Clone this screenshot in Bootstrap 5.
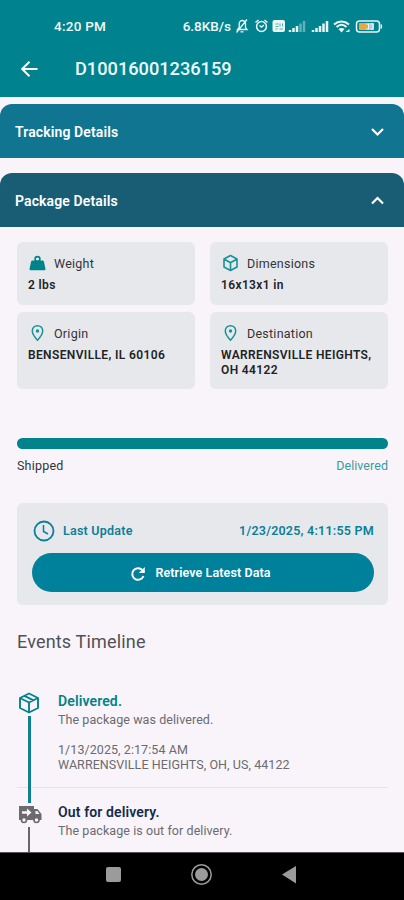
<!DOCTYPE html>
<html lang="en">
<head>
<meta charset="utf-8">
<meta name="viewport" content="width=device-width, initial-scale=1">
<title>Package tracking</title>
<link href="https://cdn.jsdelivr.net/npm/bootstrap@5.3.0/dist/css/bootstrap.min.css" rel="stylesheet">
<style>
  body { font-family: Roboto, "Liberation Sans", sans-serif; background: #f8f4fa; color: #333438; height: 900px; overflow: hidden; font-size: 13px; line-height: 15px; }
  svg { display: block; flex: none; }
  .app-head { height: 97px; background: #00838f; color: #f0fafa; }
  .status { height: 52px; padding: 0 20px 0 54px; font-size: 13.5px; font-weight: 500; }
  .clock-text { letter-spacing: .25px; }
  .title-bar { height: 34px; padding-left: 20px; }
  .title-bar h1 { font-size: 18.2px; font-weight: 500; margin-left: 36px; line-height: 22px; }
  .panel-head { height: 54px; margin-top: 7px; border-radius: 12px 12px 0 0; color: #fff; padding: 2px 20px 0 15px; font-size: 14px; font-weight: 600; letter-spacing: .12px; background: #0f7591; }
  .panel-head.open { background: #195d75; margin-top: 15px; }
  .facts { margin: 15px 16px 0 17px; display: grid; grid-template-columns: 178px 178px; column-gap: 15px; row-gap: 7px; grid-template-rows: 63px 77px; }
  .fact, .update { background: #e7e8eb; border-radius: 6px; }
  .fact { padding: 12px 0 0 11px; }
  .fact-label { height: 18px; gap: 7px; font-size: 12.5px; letter-spacing: .25px; }
  .fact-value { margin-top: 6px; font-size: 12px; font-weight: 600; letter-spacing: .37px; color: #222327; }
  .content { margin: 0 16px 0 17px; }
  .progress { height: 11px; margin-top: 49px; border-radius: 6px; }
  .progress-bar { background: #00838a; width: 100%; }
  .stage { margin-top: 9px; font-size: 12.5px; letter-spacing: .2px; }
  .teal { color: #00838a; }
  .stage .teal { color: #3a9c98; letter-spacing: .05px; }
  .update { margin-top: 30px; height: 102px; padding: 16px 14px 0 15px; }
  .update-row { height: 23px; color: #0b7f9a; font-size: 12.5px; font-weight: 600; padding-left: 1px; letter-spacing: .23px; }
  .refresh { height: 39px; width: 342px; margin-top: 11px; background: #00819b; color: #fff; font-size: 12.5px; font-weight: 600; letter-spacing: .1px; gap: 9px; padding: 2px 5px 0 0; }
  h2 { font-size: 18px; font-weight: 400; line-height: 22px; margin: 26px 0 0; color: #505056; letter-spacing: .17px; }
  .event-row { display: grid; grid-template-columns: 24px 1fr; column-gap: 17px; }
  .event-first { margin-top: 39px; height: 96px; border-bottom: 1px solid #e6e2e8; }
  .event-row strong { display: block; font-size: 14px; font-weight: 600; line-height: 18px; letter-spacing: .13px; }
  .event-text { color: #6b6b70; font-size: 12.5px; line-height: 15px; padding-top: 2px; letter-spacing: .07px; }
  .stamp { margin-top: 13px; }
  .rail { display: flex; flex-direction: column; align-items: center; }
  .rail i { display: block; width: 3px; background: #0f7f92; flex: 1; margin-top: 2px; }
  .event-first .rail { height: 111px; z-index: 1; }
  .event-last { height: 50px; margin-top: 15px; }
  .event-last .rail i { background: #68666b; width: 2px; margin-top: 3px; }
  .event-last .rail { padding-top: 2px; }
  .event-last .rail svg { margin-left: 1px; }
  .navy { color: #142c4c; }
  .sys-nav { height: 48px; background: #000; border-top: 1px solid #555; padding: 0 3px 3px 0; }
</style>
</head>
<body>
<header class="app-head">
  <div class="status d-flex align-items-center justify-content-between">
    <span class="clock-text">4:20 PM</span>
    <div class="d-flex align-items-center">
      <span>6.8KB/s</span>
      <svg class="ms-1" width="149" height="18" viewBox="0 0 149 18" fill="none" stroke="#e9f6f6" stroke-width="1.5">
        <path d="M2.5 12.5h9.5l-1.5-2V7c0-2-1-3.300-3-3.500-2-.1-3.300 1.300-3.300 3.500v3.500zM5.500 14.800h3M12 2.500 1.500 15.500" stroke-width="1.300"/>
        <circle cx="26.500" cy="9.500" r="4.900"/><path d="M24.500 8.500 26.500 10l2.500-2M20.500 5.500l3-2.500M32.500 5.500l-3-2.500"/>
        <rect x="37.500" y="3" width="12.500" height="12" rx="2" fill="#e9f6f6" stroke="none"/>
        <path d="M40.500 7h3M45 6.500v3M40.500 9.500h3M40.500 12h2M44.500 12h3.500M47.500 6.500v3" stroke="#5aabb1" stroke-width="1"/>
        <path d="M55 15v-2M58.500 15v-4M62 15V9" stroke-width="2.500"/><path d="M65.500 15V6.500M69 15V4" stroke="#62b0b6" stroke-width="2.500"/>
        <path d="M78 15v-2M81.500 15v-4M85 15V9M88.500 15V6.500M92 15V4" stroke-width="2.500"/>
        <path d="M99 7.500c4.500-4 10.500-4 15 0M101.500 10c3.300-2.800 7-2.800 10 0" stroke-width="2"/><path d="M103.500 12c2-1.500 4-1.500 6 0l-3 3.500z" fill="#e9f6f6" stroke="none"/><path d="M110.500 15h4v-3z" fill="#e9f6f6" stroke="none"/>
        <rect x="121.500" y="4" width="23" height="11" rx="3"/><rect x="124" y="6" width="9" height="7" rx="1" fill="#f0a53c" stroke="none"/><rect x="133" y="6" width="6" height="7" fill="#b8cfcc" stroke="none"/><path d="M131 7h2.500v5H131M136 7h2v5h-2" stroke="#e9f6f6" stroke-width="1"/><path d="M146.300 7.500v4"/>
      </svg>
    </div>
  </div>
  <div class="title-bar d-flex align-items-center">
    <svg width="19" height="18" viewBox="0 0 19 18" fill="none" stroke="#fff" stroke-width="2"><path d="M17.500 9H2.500M9.500 1.700 2.200 9l7.300 7.300"/></svg>
    <h1 class="mb-0">D10016001236159</h1>
  </div>
</header>
<main>
  <section class="panel-head d-flex align-items-center justify-content-between">
    <span>Tracking Details</span>
    <svg width="13" height="10" viewBox="0 0 13 10" fill="none" stroke="#fff" stroke-width="2.200"><path d="m1 2 5.500 5.500L12 2"/></svg>
  </section>
  <section class="panel-head open d-flex align-items-center justify-content-between">
    <span>Package Details</span>
    <svg width="13" height="10" viewBox="0 0 13 10" fill="none" stroke="#fff" stroke-width="2.200"><path d="m1 7.500 5.500-5.500L12 7.500"/></svg>
  </section>
  <div class="facts">
    <div class="fact">
      <div class="fact-label d-flex align-items-center">
        <svg width="19" height="18" viewBox="0 0 19 18"><path d="M4.300 6.500h10.400c.6 0 1 .4 1.200 1L17.500 15c.1.700-.3 1.200-1 1.200H2.500c-.7 0-1.100-.5-1-1.200l1.600-7.500c.2-.6.600-1 1.200-1z" fill="#00838a"/><circle cx="9.500" cy="5" r="2.400" fill="none" stroke="#00838a" stroke-width="1.600"/></svg>
        <span>Weight</span>
      </div>
      <div class="fact-value">2 lbs</div>
    </div>
    <div class="fact">
      <div class="fact-label d-flex align-items-center">
        <svg width="19" height="18" viewBox="0 0 19 18" fill="none" stroke="#1a9298" stroke-width="1.600" stroke-linejoin="round"><path d="M9.500 1.500 16 5v8l-6.500 3.500L3 13V5zM3 5l6.500 3.700L16 5M9.500 8.700v7.800"/></svg>
        <span>Dimensions</span>
      </div>
      <div class="fact-value">16x13x1 in</div>
    </div>
    <div class="fact">
      <div class="fact-label d-flex align-items-center">
        <svg width="19" height="18" viewBox="0 0 19 18" fill="none" stroke="#1a9298" stroke-width="1.500"><path d="M9.500 16.200C6 12.500 4.300 9.600 4.300 7c0-3.200 2.300-5.300 5.200-5.300s5.200 2.100 5.200 5.300c0 2.600-1.700 5.500-5.200 9.200z"/><circle cx="9.500" cy="7" r="1.700" fill="#1a9298" stroke="none"/></svg>
        <span>Origin</span>
      </div>
      <div class="fact-value">BENSENVILLE, IL 60106</div>
    </div>
    <div class="fact">
      <div class="fact-label d-flex align-items-center">
        <svg width="19" height="18" viewBox="0 0 19 18" fill="none" stroke="#1a9298" stroke-width="1.500"><path d="M9.500 16.200C6 12.500 4.300 9.600 4.300 7c0-3.200 2.300-5.300 5.200-5.300s5.200 2.100 5.200 5.300c0 2.600-1.700 5.500-5.200 9.200z"/><circle cx="9.500" cy="7" r="1.700" fill="#1a9298" stroke="none"/></svg>
        <span>Destination</span>
      </div>
      <div class="fact-value">WARRENSVILLE HEIGHTS,<br>OH 44122</div>
    </div>
  </div>
  <div class="content">
    <div class="progress"><div class="progress-bar"></div></div>
    <div class="stage d-flex justify-content-between"><span>Shipped</span><span class="teal">Delivered</span></div>
    <section class="update">
      <div class="update-row d-flex align-items-center">
        <svg width="22" height="22" viewBox="0 0 22 22" fill="none" stroke="#0b7f9a" stroke-width="1.800"><circle cx="11" cy="11" r="9.500"/><path d="M10.500 5v6.500l4.500 2.500" stroke-width="1.500"/></svg>
        <span class="ms-2">Last Update</span>
        <span class="ms-auto">1/23/2025, 4:11:55 PM</span>
      </div>
      <button class="refresh btn rounded-pill d-flex align-items-center justify-content-center border-0">
        <svg width="16" height="16" viewBox="0 0 16 16" fill="none" stroke="#fff" stroke-width="2"><path d="M13.500 10A5.800 5.800 0 1 1 12.300 4"/><path d="M14.800 1v6H8.800z" fill="#fff" stroke="none"/></svg>
        <span>Retrieve Latest Data</span>
      </button>
    </section>
    <h2>Events Timeline</h2>
    <article class="event-row event-first">
      <div class="rail">
        <svg width="22" height="22" viewBox="0 0 22 22" fill="none" stroke="#00838a" stroke-width="1.900" stroke-linejoin="round"><path d="M11 1.500 20 6v10l-9 4.500L2 16V6zM2 6l9 4.500L20 6M11 10.500v10M6.500 3.800l9 4.500"/></svg>
        <i></i>
      </div>
      <div>
        <strong class="teal">Delivered.</strong>
        <div class="event-text">The package was delivered.</div>
        <div class="event-text stamp">1/13/2025, 2:17:54 AM<br>WARRENSVILLE HEIGHTS, OH, US, 44122</div>
      </div>
    </article>
    <article class="event-row event-last">
      <div class="rail">
        <svg width="24" height="19" viewBox="0 0 24 19"><path d="M1 1h15v3h3.500L23.500 9v6H1z" fill="#6b6a6e"/><path d="M17.500 6h1.800l2.200 3h-4z" fill="#f8f4fa"/><path d="M4 6.200h5V3.500L13.500 7.500 9 11.500V8.800H4z" fill="#f8f4fa"/><circle cx="6" cy="15" r="2.500" fill="#f8f4fa" stroke="#6b6a6e" stroke-width="1.600"/><circle cx="18.500" cy="15" r="2.500" fill="#f8f4fa" stroke="#6b6a6e" stroke-width="1.600"/></svg>
        <i></i>
      </div>
      <div>
        <strong class="navy">Out for delivery.</strong>
        <div class="event-text">The package is out for delivery.</div>
      </div>
    </article>
  </div>
</main>
<footer class="sys-nav fixed-bottom d-flex justify-content-center align-items-center">
  <svg width="192" height="24" viewBox="0 0 192 24" fill="#9b9b9b"><rect x="1" y="4" width="15" height="15" rx="2"/><circle cx="96.500" cy="11.500" r="6.500"/><circle cx="96.500" cy="11.500" r="9.700" fill="none" stroke="#9b9b9b" stroke-width="1.500"/><path d="M177 11.500 191 3v17.500z"/></svg>
</footer>
<script src="https://cdn.jsdelivr.net/npm/bootstrap@5.3.0/dist/js/bootstrap.bundle.min.js"></script>
</body>
</html>
